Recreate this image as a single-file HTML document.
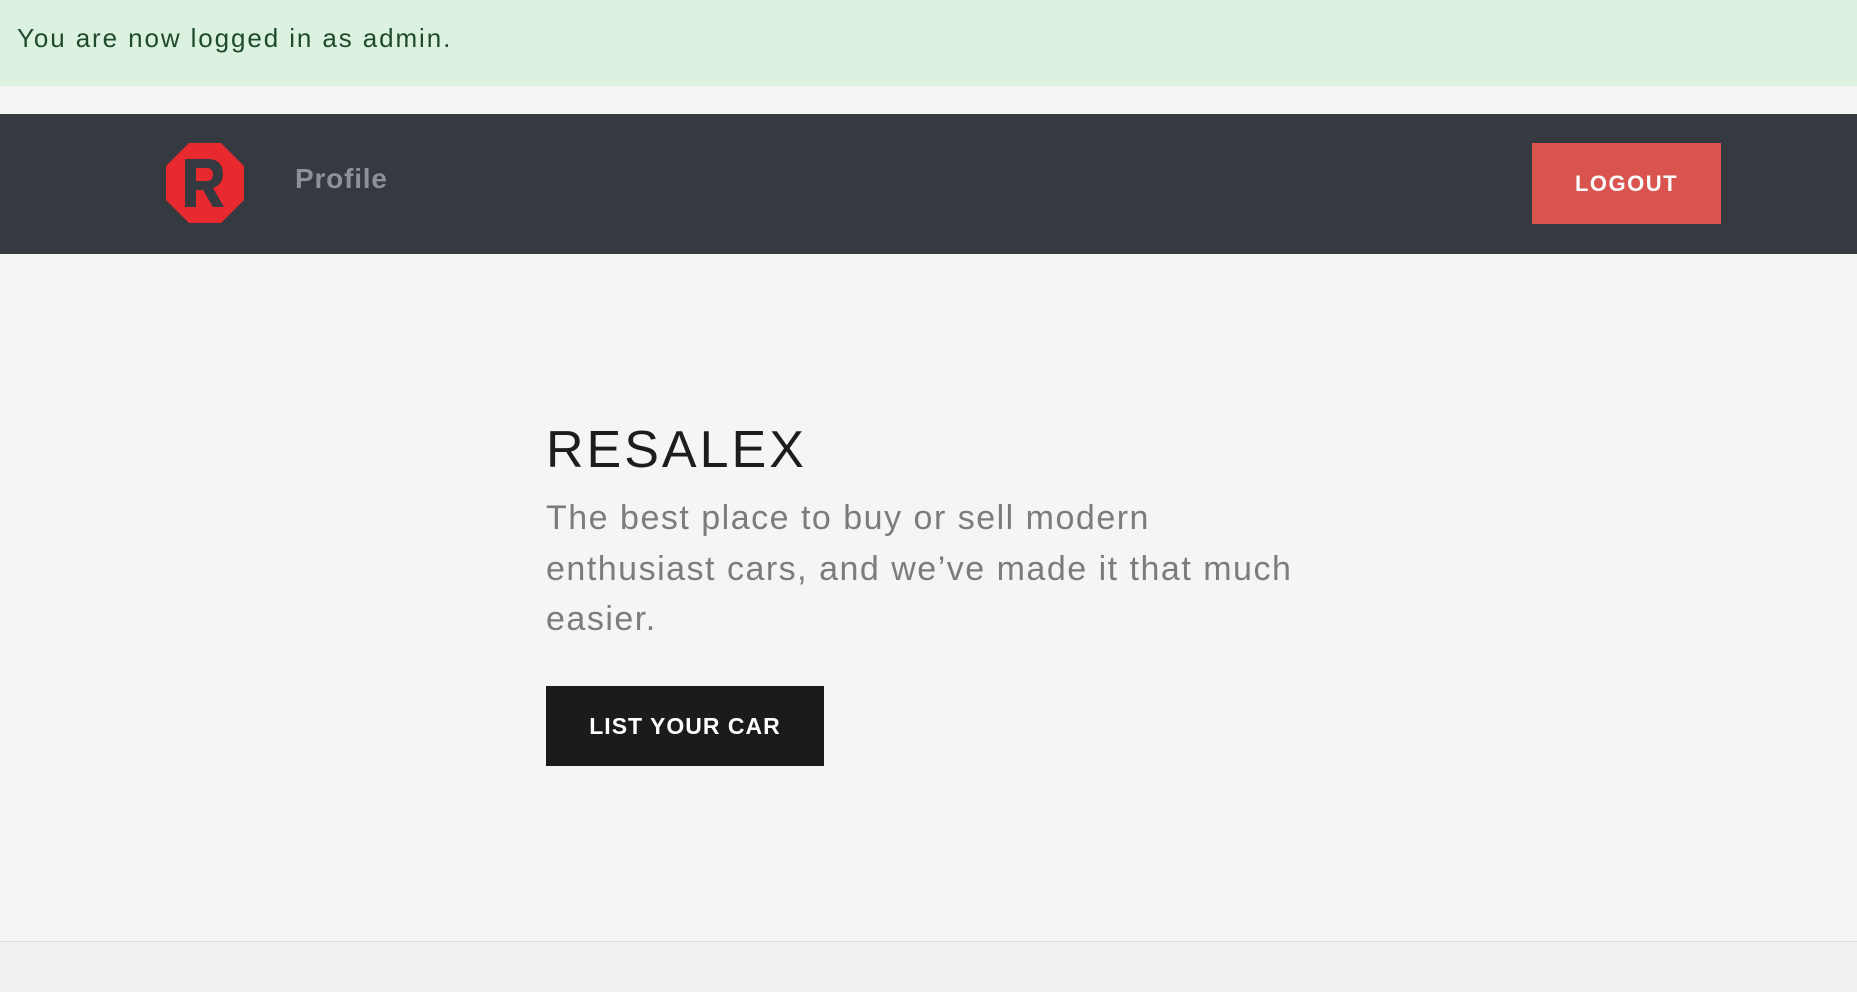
<!DOCTYPE html>
<html><head><style>
*{margin:0;padding:0;box-sizing:border-box}
body{width:1857px;height:992px;background:#f5f5f5;font-family:"Liberation Sans",sans-serif;position:relative;overflow:hidden}
.alert{position:absolute;left:0;top:0;width:1857px;height:86px;background:#dcf2e1;color:#1f4a2b;font-size:26px;letter-spacing:1.9px}
.alert span{position:absolute;left:17px;top:23px}
.nav{position:absolute;left:0;top:114px;width:1857px;height:140px;background:#343a40}
.logo{position:absolute;left:166px;top:29px;width:78px;height:80px}
.profile{position:absolute;left:295px;top:49px;color:#8c9196;font-weight:bold;font-size:28px;letter-spacing:.8px}
.logout{position:absolute;left:1532px;top:29px;width:189px;height:81px;background:#d9534f;color:#fff;font-weight:bold;font-size:22px;letter-spacing:1.5px;text-align:center;line-height:81px}
h1{position:absolute;left:546px;top:420px;font-weight:300;font-size:52px;color:#1d1d1d;letter-spacing:3px;line-height:60px}
p{position:absolute;left:546px;top:493px;white-space:nowrap;font-size:34px;color:#7c7c7c;line-height:50.5px;letter-spacing:1.5px}
.btn{position:absolute;left:546px;top:686px;width:278px;height:80px;background:#1b1b1b;color:#fff;font-weight:bold;font-size:23px;letter-spacing:1px;text-align:center;line-height:80px}
.foot{position:absolute;left:0;top:941px;width:1857px;height:51px;background:#f0f1f2;border-top:1px solid #dcdcdc}
</style></head><body>
<div class="alert"><span>You are now logged in as admin.</span></div>
<div class="nav">
<svg class="logo" viewBox="0 0 78 80"><polygon points="23,0 55,0 78,23 78,57 55,80 23,80 0,57 0,23" fill="#e8292e"/><path d="M19 16 H42 C53 16 57 23 57 31 C57 38 53 43 47 45 L58 64 H47 L37 47 H30 V64 H19 Z M30 25 V38 H41 C45 38 47 35 47 31.5 C47 28 45 25 41 25 Z" fill="#343a40" fill-rule="evenodd"/></svg>
<div class="profile">Profile</div>
<div class="logout">LOGOUT</div>
</div>
<h1>RESALEX</h1>
<p>The best place to buy or sell modern<br>enthusiast cars, and we’ve made it that much<br>easier.</p>
<div class="btn">LIST YOUR CAR</div>
<div class="foot"></div>
</body></html>
